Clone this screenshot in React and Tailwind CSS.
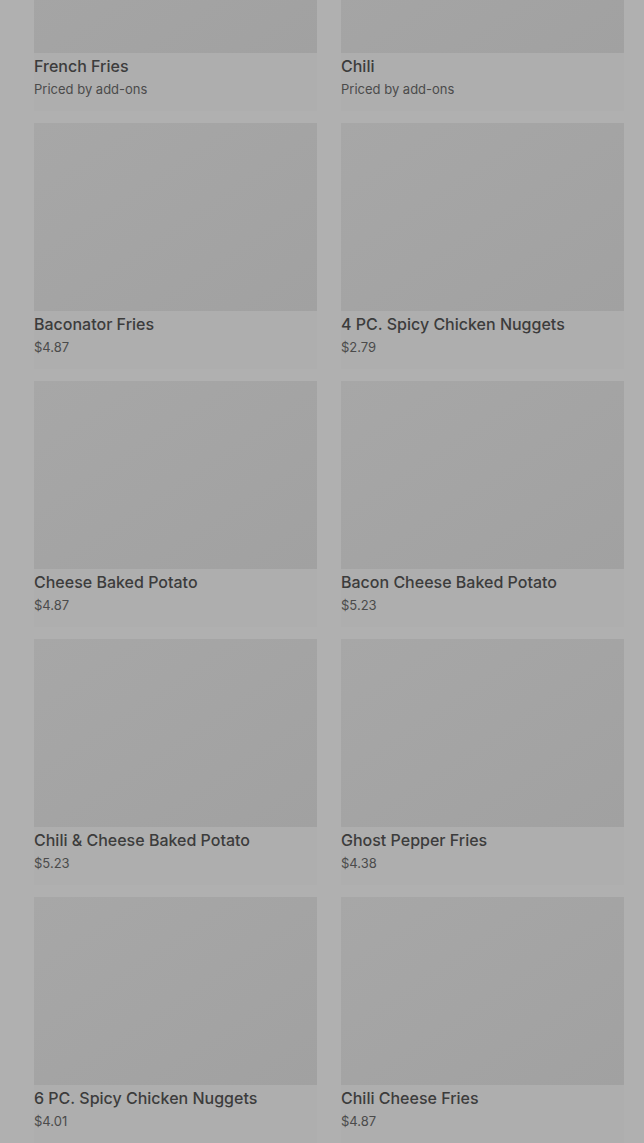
const items = [
  { name: 'French Fries', price: 'Priced by add-ons' },
  { name: 'Chili', price: 'Priced by add-ons' },
  { name: 'Baconator Fries', price: '$4.87' },
  { name: '4 PC. Spicy Chicken Nuggets', price: '$2.79' },
  { name: 'Cheese Baked Potato', price: '$4.87' },
  { name: 'Bacon Cheese Baked Potato', price: '$5.23' },
  { name: 'Chili & Cheese Baked Potato', price: '$5.23' },
  { name: 'Ghost Pepper Fries', price: '$4.38' },
  { name: '6 PC. Spicy Chicken Nuggets', price: '$4.01' },
  { name: 'Chili Cheese Fries', price: '$4.87' },
];

function MenuCard({ item }) {
  return (
    <div className="flex flex-col h-[246px] bg-[#aeaeae]">
      <div className="h-[188px] bg-gradient-to-br from-[#a7a7a7] to-[#a1a1a1]" />
      <p className="pt-[1px] text-[16px] leading-6 font-medium text-[#3c3c3c]">{item.name}</p>
      <p className="mt-[1px] text-[13px] leading-5 text-[#4b4b4b]">{item.price}</p>
    </div>
  );
}

export default function App() {
  return (
    <div
      className="h-[1143px] overflow-hidden bg-[#b0b0b0] pl-[34px] pr-[20px]"
      style={{ fontFamily: 'Inter, "Noto Sans", sans-serif' }}
    >
      <div className="grid grid-cols-2 gap-x-6 gap-y-3 -mt-[135px]">
        {items.map(item => (
          <MenuCard key={item.name} item={item} />
        ))}
      </div>
    </div>
  );
}
